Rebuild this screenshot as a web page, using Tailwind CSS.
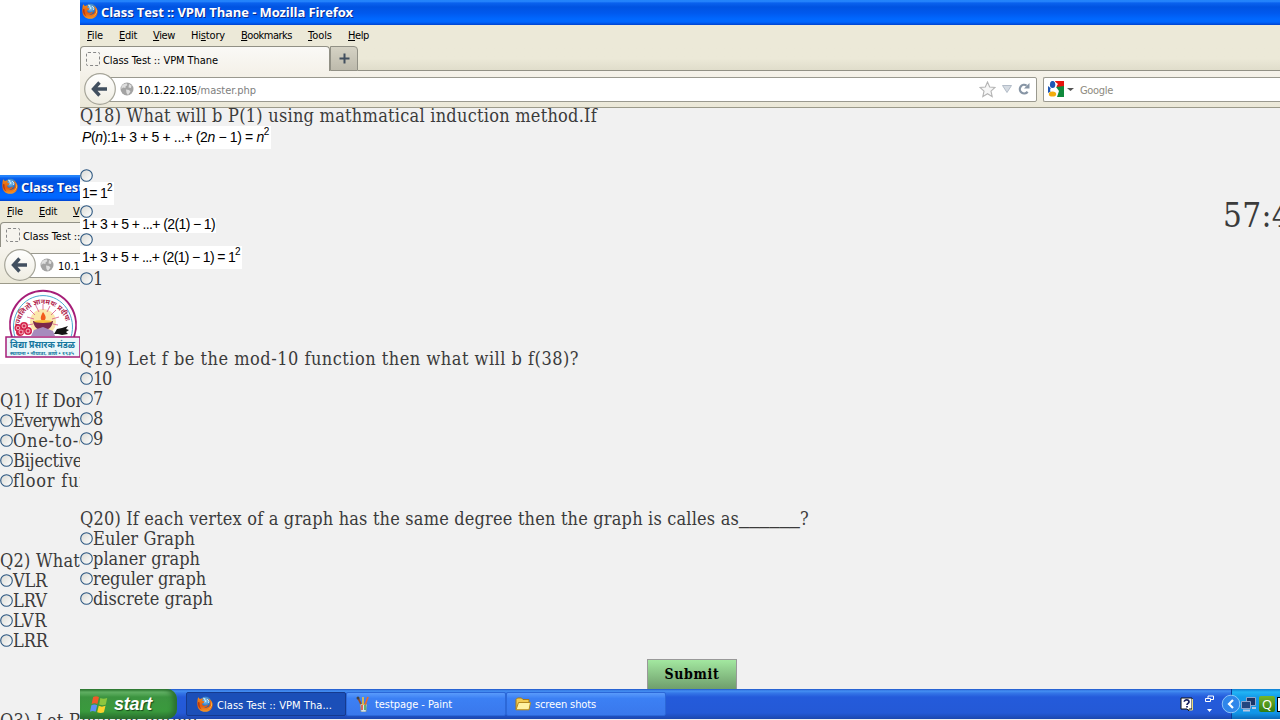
<!DOCTYPE html>
<html lang="en">
<head>
<meta charset="utf-8">
<title>Class Test :: VPM Thane</title>
<script src="https://cdn.jsdelivr.net/npm/@tailwindcss/browser@4"></script>
</head>
<body class="relative h-[720px] w-[1280px] overflow-hidden bg-white font-['DejaVu_Sans_Condensed','DejaVu_Sans',sans-serif] text-[11px] text-black">

<!-- Shared icons -->
<svg class="absolute size-0">
  <defs>
    <radialGradient id="globe" cx=".5" cy=".35" r=".6"><stop offset="0" stop-color="#8fd0f5"/><stop offset=".6" stop-color="#2f78c4"/><stop offset="1" stop-color="#173c86"/></radialGradient>
    <linearGradient id="fox" x1="0" y1="0" x2="0" y2="1"><stop offset="0" stop-color="#f08a1c"/><stop offset=".6" stop-color="#e35a10"/><stop offset="1" stop-color="#f59a28"/></linearGradient>
    <linearGradient id="round" x1="0" y1="0" x2="0" y2="1"><stop offset="0" stop-color="#ffffff"/><stop offset="1" stop-color="#efede2"/></linearGradient>
    <linearGradient id="rad" x1="0" y1="0" x2="1" y2="1"><stop offset="0" stop-color="#d9d9d4"/><stop offset="1" stop-color="#ffffff"/></linearGradient>
  </defs>
  <symbol id="firefox" viewBox="0 0 16 16">
    <circle cx="8.6" cy="7" r="6.4" fill="url(#globe)"/>
    <path d="M6 2.2l2 .3-.5 1.5 1.6 1-1.4 1.2M10 3l2 2-.6 2" stroke="#c4e6f7" stroke-width="1" fill="none"/>
    <path d="M1.2 1.2 2.8 3C4 2.2 5.3 2.3 6 2.7L5 4.6l2.4 1-.8 1.3-1.6.5c.1 1.8 1.500 2.600 3 2.400 1.200-.2 1.800-1.100 3-.8-.5 1.800-2.500 2.600-4 2.400 3 1 6-.8 6-4.400 0-2-.8-3.400-1.800-4.500 2.600 1 4.500 3.500 4.400 6.400C15.500 13 12.300 15.800 8 15.800 3.700 15.800.4 12.600.3 8.400.2 5.800.5 3.200 1.200 1.200z" fill="url(#fox)"/>
    <path d="M14.200 5c1 3.500-.6 7.600-4.400 8.600 3-.4 5.600-3 5.400-6z" fill="#ffd34d"/>
    <path d="M1 6c-.4 3 .8 6 3.600 7.600C3 11.500 2.200 9 2.600 6.500z" fill="#b93a0c"/>
  </symbol>
  <symbol id="back" viewBox="0 0 32 32">
    <circle cx="16" cy="16" r="15.300" fill="url(#round)" stroke="#a5a498" stroke-width="1.200"/>
    <path d="M15.500 9.500 9.500 16l6 6.500M10 16h13" fill="none" stroke="#414f5f" stroke-width="3.400"/>
  </symbol>
  <symbol id="world" viewBox="0 0 14 14">
    <circle cx="7" cy="7" r="6.500" fill="#a3a3a3"/>
    <path d="M3 2.500 6.500 1.200 7.500 3 5.500 4.500 5.500 6 3 5.500 1.500 7 1.400 4.500zM9 2l2.500 1.500L11 6 8.500 5.500zM6 7.500l3 .5 1.500 1.500L8 13 6.500 11z" fill="#dedede"/>
  </symbol>
  <symbol id="radio" viewBox="0 0 13 13">
    <circle cx="6.500" cy="6.500" r="5.800" fill="url(#rad)" stroke="#2c5781" stroke-width="1.100"/>
  </symbol>
</svg>

<!-- Rear window -->
<section class="absolute left-0 top-[175px] h-[545px] w-[1200px] overflow-hidden bg-[#f1f1f1]">
  <header>
    <div class="flex h-[26px] items-center bg-[linear-gradient(#1b7cf5_0,#2b8bff_1px,#0a62ee_3px,#0053e1_7px,#0059ee_13px,#0068ff_19px,#0066ff_23px,#0043cf_26px)] pl-0.5">
      <svg class="-mt-1 size-4"><use href="#firefox"/></svg>
      <b class="ml-[3px] whitespace-nowrap font-['Open_Sans',sans-serif] text-[13px] text-white [text-shadow:1px_1px_0_#0a2a8c]" data-w="252">Class Test :: VPM Thane - Mozilla Firefox</b>
    </div>
    <div class="flex h-[21px] items-center whitespace-nowrap bg-[#ece9d8] pl-[7px] pt-px">
      <div class="w-8"><span data-w="16"><u>F</u>ile</span></div>
      <div class="w-[34px]"><span data-w="18"><u>E</u>dit</span></div>
      <div><span data-w="22"><u>V</u>iew</span></div>
    </div>
    <div class="flex h-[25px] bg-linear-to-b from-[#ece9d8] to-[#e2dfcd]">
      <div class="flex w-[250px] items-center rounded-t border border-b-0 border-[#919085] bg-[#f6f4ee] pl-[5px]">
        <i class="size-3.5 rounded-xs border border-dashed border-[#888]"></i><span class="ml-[3px] mt-1 whitespace-nowrap" data-w="115">Class Test :: VPM Thane</span>
      </div>
    </div>
    <div class="flex h-[37px] items-center border-b border-[#9c9a8a] bg-linear-to-b from-[#f6f4ee] to-[#ebe8d8] pl-1">
      <svg class="z-10 size-8 shrink-0"><use href="#back"/></svg>
      <div class="-ml-2 flex h-[25px] w-[928px] items-center border border-[#9a998f] bg-white pl-[11px]">
        <svg class="size-3.5"><use href="#world"/></svg><span class="ml-1 mt-1 whitespace-nowrap" data-w="118">10.1.22.105<span class="text-[#808080]">/master.php</span></span>
      </div>
    </div>
  </header>
  <main class="font-['DejaVu_Serif_Condensed','DejaVu_Serif',serif] text-[18px] leading-5 text-[#3b3b3b] [&_svg+span]:mt-0.5">
    <div class="h-[80px] w-[84px] bg-white">
      <svg class="h-[80px] w-[84px]" viewBox="0 0 84 80">
        <path d="M12 53A33 34.500 0 1 1 74 53" fill="#fff" stroke="#a61e78" stroke-width="2"/>
        <path d="M15 53A29.500 31.500 0 1 1 71 53" fill="none" stroke="#48a9cf" stroke-width="1"/>
        <path id="arc" d="M19.500 44A23.500 24 0 1 1 66.500 44" fill="none"/>
        <text class="font-['Noto_Sans',sans-serif] text-[7px] font-bold" fill="#b01c4c"><textPath href="#arc">प्रज्वलितो ज्ञानमयः प्रदीपः</textPath></text>
        <circle cx="43" cy="38" r="13" fill="#fbe7ac"/>
        <g stroke="#d5588c" stroke-width=".8"><path d="M43 20v6M36 22l3 6M50 22l-3 6M30 26l5 5M56 26l-5 5M27 33l7 2M59 33l-7 2M28 41l5-1M58 41l-5-1"/></g>
        <path d="M43 28c4 5 3 8 0 9-3-1-3-4 0-9z" fill="#f25b1d"/>
        <path d="M33 37h20c-1 7-5 9-10 9s-9-2-10-9z" fill="#7b284a"/><ellipse cx="43" cy="37.500" rx="9" ry="1.500" fill="#f5c33d"/>
        <path d="M34 46l9-3 10 4 2 5H31z" fill="#a68bbd"/>
        <g fill="#d4244c"><circle cx="18" cy="44" r="3.500"/><circle cx="24" cy="42" r="4"/><circle cx="28" cy="47" r="4"/><circle cx="20" cy="48" r="4"/></g>
        <g fill="none" stroke="#ffd8dd" stroke-width=".8"><circle cx="18" cy="44" r="1.800"/><circle cx="24" cy="42" r="2"/><circle cx="28" cy="47" r="2"/><circle cx="21" cy="48" r="2"/></g>
        <path d="M54 50l3-5 5-1 6-2-2 3 3 1-3 2 2 2-6 1-4-1z" fill="#151515"/>
        <rect x="6" y="53" width="74" height="20" fill="#eaf8fb" stroke="#a61e78" stroke-width="1.500"/>
        <text x="10" y="64" textLength="65" lengthAdjust="spacingAndGlyphs" class="font-['Noto_Sans',sans-serif] text-[10px] font-bold" fill="#16779f">विद्या प्रसारक मंडळ</text>
        <text x="10" y="71" textLength="64" lengthAdjust="spacingAndGlyphs" class="font-['Noto_Sans',sans-serif] text-[5px] font-bold" fill="#16779f">स्थापना • नौपाडा, ठाणे • १९३५</text>
      </svg>
    </div>
    <div class="mt-[26px] whitespace-nowrap">
      <p class="h-5 pt-px" data-w="152">Q1) If Domain and</p>
      <p class="flex h-5 items-center"><svg class="size-[13px]"><use href="#radio"/></svg><span data-w="92">Everywhere</span></p>
      <p class="flex h-5 items-center"><svg class="size-[13px]"><use href="#radio"/></svg><span data-w="98">One-to-one</span></p>
      <p class="flex h-5 items-center"><svg class="size-[13px]"><use href="#radio"/></svg><span data-w="69">Bijective</span></p>
      <p class="flex h-5 items-center"><svg class="size-[13px]"><use href="#radio"/></svg><span data-w="122">floor function</span></p>
    </div>
    <div class="mt-[60px] whitespace-nowrap">
      <p class="h-5 pt-px" data-w="80">Q2) What</p>
      <p class="flex h-5 items-center"><svg class="size-[13px]"><use href="#radio"/></svg><span data-w="34">VLR</span></p>
      <p class="flex h-5 items-center"><svg class="size-[13px]"><use href="#radio"/></svg><span data-w="34">LRV</span></p>
      <p class="flex h-5 items-center"><svg class="size-[13px]"><use href="#radio"/></svg><span data-w="34">LVR</span></p>
      <p class="flex h-5 items-center"><svg class="size-[13px]"><use href="#radio"/></svg><span data-w="35">LRR</span></p>
    </div>
    <p class="mt-[60px] h-5 whitespace-nowrap pt-px" data-w="197">Q3) Let Relation define</p>
  </main>
</section>

<!-- Front window -->
<section class="absolute left-20 top-0 flex h-[719px] w-[1200px] flex-col overflow-hidden bg-[#f1f1f1]">
  <header class="shrink-0">
    <div class="flex h-[25px] items-center bg-[linear-gradient(#1b7cf5_0,#2b8bff_1px,#0a62ee_3px,#0053e1_7px,#0059ee_13px,#0068ff_19px,#0066ff_22px,#0043cf_25px)] pl-0.5">
      <svg class="-mt-1 size-4"><use href="#firefox"/></svg>
      <b class="ml-[3px] whitespace-nowrap font-['Open_Sans',sans-serif] text-[13px] text-white [text-shadow:1px_1px_0_#0a2a8c]" data-w="252">Class Test :: VPM Thane - Mozilla Firefox</b>
    </div>
    <nav class="flex h-[21px] items-center whitespace-nowrap bg-[#ece9d8] pl-[7px] pt-px">
      <div class="w-8"><span data-w="16"><u>F</u>ile</span></div>
      <div class="w-[34px]"><span data-w="18"><u>E</u>dit</span></div>
      <div class="w-[38px]"><span data-w="22"><u>V</u>iew</span></div>
      <div class="w-[50px]"><span data-w="34">Hi<u>s</u>tory</span></div>
      <div class="w-[67px]"><span data-w="51"><u>B</u>ookmarks</span></div>
      <div class="w-10"><span data-w="24"><u>T</u>ools</span></div>
      <div><span data-w="21"><u>H</u>elp</span></div>
    </nav>
    <div class="flex h-[25px] bg-linear-to-b from-[#ece9d8] from-50% to-[#dfdcca]">
      <div class="flex w-[250px] items-center rounded-t border border-b-0 border-[#919085] bg-linear-to-b from-[#faf9f6] to-[#f5f2ea] pl-[5px]">
        <i class="size-3.5 rounded-xs border border-dashed border-[#888]"></i><span class="ml-[3px] mt-1 whitespace-nowrap" data-w="115">Class Test :: VPM Thane</span>
      </div>
      <div class="grid w-7 place-items-center rounded-tr border border-[#919085] bg-linear-to-b from-[#d5d2c4] to-[#bdbaac]">
        <svg class="size-[11px]" viewBox="0 0 11 11"><path d="M5.500 .5v10M.5 5.500h10" stroke="#414f5f" stroke-width="2"/></svg>
      </div>
      <div class="flex-1 border-b border-[#919085]"></div>
    </div>
    <div class="flex h-[37px] items-center border-b border-[#9c9a8a] bg-linear-to-b from-[#f5f2ea] to-[#ebe8d8] pl-1">
      <svg class="z-10 size-8 shrink-0"><use href="#back"/></svg>
      <div class="-ml-2 flex h-[25px] w-[929px] shrink-0 items-center rounded-xs border border-[#9a998f] bg-white pl-[11px]">
        <svg class="size-3.5"><use href="#world"/></svg>
        <span class="ml-1 mt-1 whitespace-nowrap" data-w="118">10.1.22.105<span class="text-[#808080]">/master.php</span></span>
        <div class="ml-auto flex items-center gap-1.5 pr-1.5">
          <svg class="size-[17px]" viewBox="0 0 17 17"><path d="M8.500 1l2.200 5 5.300.5-4 3.600 1.200 5.600-4.700-3-4.700 3L5 10.100 1 6.500 6.300 6z" fill="#f6f6f6" stroke="#b4b4b4" stroke-width="1.100"/></svg>
          <svg class="h-2 w-2.5" viewBox="0 0 10 8"><path d="M.5.5h9L5 7.500z" fill="#d5dbe2" stroke="#b3bcc8"/></svg>
          <svg class="size-3" viewBox="0 0 12 12"><path d="M9.600 8.700A4.300 4.300 0 1 1 8.600 2.600" fill="none" stroke="#8795a5" stroke-width="2.300"/><path d="M11.500 0v5.500H6z" fill="#8795a5"/></svg>
        </div>
      </div>
      <div class="ml-1.5 flex h-[25px] flex-1 items-center rounded-l-xs border border-r-0 border-[#9a998f] bg-white pl-1">
        <svg class="size-4" viewBox="0 0 16 16"><path d="M7 0h9v7H9z" fill="#e8140e"/><path d="M8 6l8-1v11H7z" fill="#108a3c"/><path d="M0 5l5 4-5 3z" fill="#1d56b4"/><path d="M6 0l4 3-2 3 3 4-2 6H5L2 9z" fill="#fff"/><ellipse cx="4.600" cy="3.500" rx="2.700" ry="3.600" fill="#1d56b4"/><ellipse cx="4.500" cy="13" rx="3.700" ry="2.600" fill="#f3ad0e"/></svg>
        <svg class="ml-[3px] h-[3px] w-[7px]" viewBox="0 0 7 3"><path d="M0 0h7L3.500 3z" fill="#555"/></svg>
        <span class="ml-1.5 mt-1 text-[#8d8a7e]" data-w="33">Google</span>
      </div>
    </div>
  </header>

  <main class="relative flex-1 overflow-hidden font-['DejaVu_Serif_Condensed','DejaVu_Serif',serif] text-[18px] leading-5 text-[#3b3b3b] [&_svg+span]:mt-0.5">
    <div class="-mt-[2px] flex flex-col items-start whitespace-nowrap">
      <p class="h-5" data-w="517">Q18) What will b P(1) using mathmatical induction method.If</p>
      <p class="h-[23px] w-[191px] bg-white pl-0.5 font-['Liberation_Sans',sans-serif] text-[14px] leading-[23px] text-black"><span data-w="187"><i>P</i>(<i>n</i>):1+ 3 + 5 + ...+ (2<i>n</i> − 1) = <i>n</i><sup class="-top-[7px] text-[10px]">2</sup></span></p>
      <svg class="mt-5 size-[13px]"><use href="#radio"/></svg>
      <p class="h-[23px] w-[34px] bg-white pl-0.5 font-['Liberation_Sans',sans-serif] text-[14px] leading-[23px] text-black"><span data-w="30">1= 1<sup class="-top-[7px] text-[10px]">2</sup></span></p>
      <svg class="size-[13px]"><use href="#radio"/></svg>
      <p class="h-[15px] w-[136px] bg-white pl-0.5 font-['Liberation_Sans',sans-serif] text-[14px] leading-[13px] text-black"><span data-w="133">1+ 3 + 5 + ...+ (2(1) − 1)</span></p>
      <svg class="size-[13px]"><use href="#radio"/></svg>
      <p class="h-[23px] w-[162px] bg-white pl-0.5 font-['Liberation_Sans',sans-serif] text-[14px] leading-[23px] text-black"><span data-w="158">1+ 3 + 5 + ...+ (2(1) − 1) = 1<sup class="-top-[7px] text-[10px]">2</sup></span></p>
      <p class="-mt-px flex h-5 items-center"><svg class="mt-px size-[13px]"><use href="#radio"/></svg><span data-w="8">1</span></p>
    </div>
    <div class="mt-[60px] whitespace-nowrap">
      <p class="h-5 pt-px"><span data-w="499">Q19) Let f be the mod-10 function then what will b f(38)?</span></p>
      <p class="flex h-5 items-center"><svg class="size-[13px]"><use href="#radio"/></svg><span data-w="18">10</span></p>
      <p class="flex h-5 items-center"><svg class="size-[13px]"><use href="#radio"/></svg><span data-w="10">7</span></p>
      <p class="flex h-5 items-center"><svg class="size-[13px]"><use href="#radio"/></svg><span data-w="10">8</span></p>
      <p class="flex h-5 items-center"><svg class="size-[13px]"><use href="#radio"/></svg><span data-w="10">9</span></p>
    </div>
    <div class="mt-[60px] whitespace-nowrap">
      <p class="h-5"><span data-w="659">Q20) If each vertex of a graph has the same degree then the graph is calles as</span><span class="font-['Liberation_Serif',serif] text-[20px]" data-w="61">______</span><span>?</span></p>
      <p class="flex h-5 items-center"><svg class="size-[13px]"><use href="#radio"/></svg><span data-w="102">Euler Graph</span></p>
      <p class="flex h-5 items-center"><svg class="size-[13px]"><use href="#radio"/></svg><span data-w="107">planer graph</span></p>
      <p class="flex h-5 items-center"><svg class="size-[13px]"><use href="#radio"/></svg><span data-w="113">reguler graph</span></p>
      <p class="flex h-5 items-center"><svg class="size-[13px]"><use href="#radio"/></svg><span data-w="120">discrete graph</span></p>
    </div>
    <button class="ml-[567px] mt-[51px] block h-[31px] w-[90px] border border-[#999] bg-linear-to-b from-[#a3e8a0] to-[#6f9e6c] pb-0.5 text-[14px] font-bold leading-[26px] text-black"><span data-w="55">Submit</span></button>
    <div class="absolute left-[1143px] top-[88px] whitespace-nowrap text-[33px] leading-10" data-w="68">57:4</div>
  </main>

  <footer class="flex h-[30px] shrink-0 items-stretch bg-[linear-gradient(#1f55c9_0,#4590f3_2px,#3577e8_4px,#245bdb_8px,#2459d6_24px,#1c47ae_30px)] text-white">
    <div class="flex w-[97px] items-center rounded-r-[10px] bg-[linear-gradient(#2c7a30_0,#66b568_3px,#3c9440_8px,#3a9a3d_22px,#2b7130_30px)] pl-[10px] shadow-[inset_-4px_0_5px_#2a6f2f]">
      <svg class="size-[19px]" viewBox="0 0 18 18"><path d="M3 2c2-1.200 3.600-1 5.500 0L7 8.500C5 7.500 3.500 7.500 1.500 8.500z" fill="#f0592a"/><path d="M9.800 2.800c2 1 4 1 6.500 0L15 9c-2 1-4 1-6.300 0z" fill="#8cc63f"/><path d="M1.300 9.800c2-1 3.600-1 5.500 0l-1.500 6c-2-1-3.500-1-5.300 0z" fill="#5d8ff5"/><path d="M8.300 10.300c2 1 4 1 6.400 0l-1.500 6c-2 1-4 1-6.400 0z" fill="#fcd32c"/></svg>
      <b class="ml-[5px] font-['Liberation_Sans',sans-serif] text-[18px] italic leading-none [text-shadow:1px_1px_1px_#174a1a]" data-w="38">start</b>
    </div>
    <div class="my-[3px] ml-[9px] flex w-[160px] items-center rounded-xs border border-[#153a8e] bg-[#1b4fb8] pl-2.5">
      <svg class="size-4"><use href="#firefox"/></svg><span class="ml-1 mt-1 whitespace-nowrap" data-w="115">Class Test :: VPM Tha...</span>
    </div>
    <div class="my-[3px] flex w-[160px] items-center rounded-xs border border-[#2c68d8] bg-linear-to-b from-[#5a9bfb] via-[#3c80f4] via-25% to-[#3a78ec] pl-2">
      <svg class="size-4" viewBox="0 0 16 16"><path d="M5 8h7l-1 8H6z" fill="#d7e5ea" stroke="#6d8590" stroke-width=".7"/><g stroke-width="1.700" fill="none"><path d="M6 8 3 2" stroke="#9c4e21"/><path d="M8 9V1" stroke="#edc13d"/><path d="M10 9l3-8" stroke="#e96b27"/></g><path d="M7 9v5" stroke="#db4132" stroke-width="1.500"/><path d="M10 9v5" stroke="#3b9e4b" stroke-width="1.500"/><circle cx="3" cy="2" r="1.500" fill="#434343"/></svg>
      <span class="ml-1 mt-0.5 whitespace-nowrap" data-w="77">testpage - Paint</span>
    </div>
    <div class="my-[3px] flex w-[160px] items-center rounded-xs border border-[#2c68d8] bg-linear-to-b from-[#5a9bfb] via-[#3c80f4] via-25% to-[#3a78ec] pl-2">
      <svg class="size-4" viewBox="0 0 16 16"><path d="M1 13.500V3.500L2.500 2h4L8 3.500h6V13.500z" fill="#f2cb52" stroke="#a97a12"/><path d="M1 13.800 3.500 6.500H15.500L14 13.800z" fill="#fff1a2" stroke="#b58a20"/></svg>
      <span class="ml-1 mt-0.5 whitespace-nowrap" data-w="61">screen shots</span>
    </div>
    <div class="ml-auto flex items-center">
      <svg class="size-[14px]" viewBox="0 0 14 14"><path d="M1 1h11v11H9v2l-2-2H1z" fill="#fff" stroke="#111"/><path d="M12.500 2v11H9" stroke="#e9db7a" fill="none"/><path d="M4.300 4.800C4.300 2.200 9 2.300 9 4.900c0 1.400-2 1.500-2 3M7 9v1.600" stroke="#17205f" stroke-width="1.700" fill="none"/></svg>
      <svg class="ml-[11px] mr-[17px] h-[18px] w-[9px]" viewBox="0 0 9 18"><path d="M3 3V1h5.500v3.500H6M.5 3.500h5v3h-5z" fill="none" stroke="#fff"/><path d="M2 14h5l-2.500 3z" fill="#fff"/></svg>
    </div>
    <div class="flex w-[49px] items-center border-l border-[#0b3a94] bg-[linear-gradient(#0f7ed2_0,#22b5f5_3px,#139bea_8px,#1196e8_24px,#0c6ab8_30px)]">
      <svg class="-ml-2.5 size-[18px] shrink-0 overflow-visible" viewBox="0 0 18 18"><circle cx="9" cy="9" r="8.800" fill="#2f86ea" stroke="#a4d7fb" stroke-width=".8"/><path d="M11 5 7 9l4 4" stroke="#fff" stroke-width="2.200" fill="none"/></svg>
      <svg class="ml-px size-[15px] shrink-0" viewBox="0 0 15 15"><path d="M5.500.5h9v8h-9z" fill="#1b3567" stroke="#8fa5cc"/><path d="M.5 4.500h9v7h-9z" fill="#234680" stroke="#8fa5cc"/><path d="M2 13.500h7M11 11h4" stroke="#b8c8e2" stroke-width="2"/></svg>
      <div class="ml-[3px] grid size-4 shrink-0 place-items-center rounded-xs bg-linear-to-b from-[#76b629] to-[#2f7d12] font-['Open_Sans',sans-serif] text-[13px] leading-none text-white">Q</div>
      <div class="ml-0.5 h-[15px] w-2 shrink-0 border border-black bg-white"></div>
    </div>
  </footer>
</section>

<script>
  // Spread each label's letters so that it takes up its set width.
  function fitLabels() {
    document.querySelectorAll('[data-w]').forEach(function (el) {
      el.style.letterSpacing = '0px';
      var range = document.createRange();
      range.selectNodeContents(el);
      var gap = (Number(el.dataset.w) - range.getBoundingClientRect().width) / el.textContent.length;
      el.style.letterSpacing = gap.toFixed(3) + 'px';
    });
  }
  fitLabels();
  window.addEventListener('load', fitLabels);
  document.fonts.ready.then(fitLabels);
  setTimeout(fitLabels, 100);
</script>
</body>
</html>
